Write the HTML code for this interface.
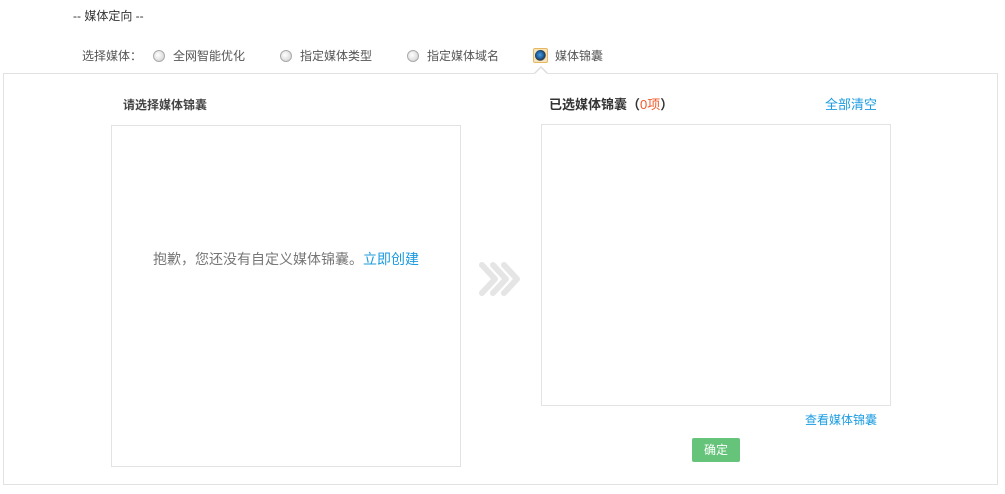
<!DOCTYPE html>
<html><head><meta charset="utf-8"><style>
*{margin:0;padding:0;box-sizing:border-box}
body{width:1005px;height:494px;background:#fff;font-family:"Liberation Sans","Noto Sans CJK SC",sans-serif;font-size:12px;color:#555;position:relative;overflow:hidden}
.a{position:absolute;white-space:nowrap;line-height:14px}
.r{position:absolute;width:12px;height:12px;border-radius:50%;border:1px solid #aaa;background:radial-gradient(circle at 40% 40%,#fff,#ccc)}
.box{position:absolute;border:1px solid #e3e3e3;background:#fff}
</style></head><body>
<div class="a" style="left:73px;top:9px;color:#333">-- 媒体定向 --</div>
<div class="a" style="left:82px;top:49px;color:#555">选择媒体：</div>
<div class="r" style="left:153px;top:50px"></div>
<div class="a" style="left:173px;top:49px">全网智能优化</div>
<div class="r" style="left:280px;top:50px"></div>
<div class="a" style="left:300px;top:49px">指定媒体类型</div>
<div class="r" style="left:407px;top:50px"></div>
<div class="a" style="left:427px;top:49px">指定媒体域名</div>
<div style="position:absolute;left:533px;top:48px;width:15px;height:15px;border:1px solid #e8b860;border-radius:2px;background:#f6e4bc"></div>
<div style="position:absolute;left:535px;top:50px;width:11px;height:11px;border-radius:50%;background:radial-gradient(circle at 45% 45%,#4aa0d8 0,#1a5a9a 45%,#333 60%,#ddd 75%)"></div>
<div class="a" style="left:555px;top:49px">媒体锦囊</div>
<div class="box" style="left:3px;top:73px;width:995px;height:412px;border-color:#e2e2e2"></div>
<div style="position:absolute;left:534px;top:66px;width:0;height:0;border-left:7px solid transparent;border-right:7px solid transparent;border-bottom:7px solid #ddd"></div>
<div style="position:absolute;left:535px;top:68px;width:0;height:0;border-left:6px solid transparent;border-right:6px solid transparent;border-bottom:6px solid #fff"></div>
<div class="a" style="left:123px;top:98px;color:#444;font-weight:bold">请选择媒体锦囊</div>
<div class="box" style="left:111px;top:125px;width:350px;height:342px"></div>
<div class="a" style="left:153px;top:251px;font-size:14px;line-height:16px;color:#777">抱歉，您还没有自定义媒体锦囊。<span style="color:#1a9be0">立即创建</span></div>
<svg style="position:absolute;left:479px;top:261px" width="44" height="36" viewBox="0 0 44 36"><g fill="none" stroke="#e5e5e5" stroke-width="6" stroke-linecap="round" stroke-linejoin="round"><path d="M3 4l13 14-13 14"/><path d="M14 4l13 14-13 14"/><path d="M25 4l13 14-13 14"/></g></svg>
<div class="a" style="left:549px;top:97px;color:#333;font-weight:bold;font-size:13px;line-height:15px">已选媒体锦囊（<span style="color:#f05a28;font-weight:normal">0项</span>）</div>
<div class="a" style="left:825px;top:97px;color:#1a9be0;font-size:13px;line-height:15px">全部清空</div>
<div class="box" style="left:541px;top:124px;width:350px;height:282px"></div>
<div class="a" style="left:805px;top:413px;color:#1a9be0">查看媒体锦囊</div>
<div style="position:absolute;left:692px;top:438px;width:48px;height:24px;background:#66c47a;border-radius:2px;color:#fff;text-align:center;line-height:24px;font-size:12px">确定</div>
</body></html>
